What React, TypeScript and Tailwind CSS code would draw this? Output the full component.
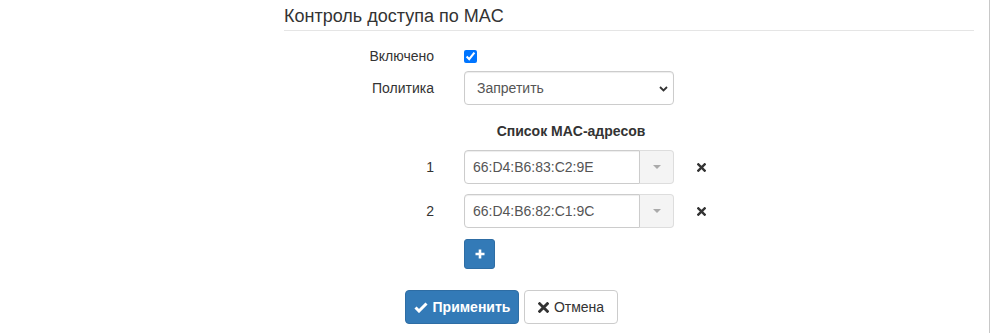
import React from 'react';

const macs = ['66:D4:B6:83:C2:9E', '66:D4:B6:82:C1:9C'];

const RemoveIcon = ({ size = 9 }: { size?: number }) => (
  <svg width={size} height={size} viewBox="0 0 10 10">
    <path d="M1.5 1.5 L8.5 8.5 M8.5 1.5 L1.5 8.5" stroke="currentColor" strokeWidth="2.6" strokeLinecap="square" />
  </svg>
);

const App: React.FC = () => {
  return (
    <div className="h-[333px] w-[990px] bg-white border-r border-[#c8c8c8] pl-[284px] pr-[15px] font-['Liberation_Sans',Arial,sans-serif] text-[14px] text-[#333]">
      {/* Heading */}
      <h4 className="pt-[6px] pb-[4px] text-[18px] leading-[20px] border-b border-[#e5e5e5]">
        Контроль доступа по MAC
      </h4>

      {/* Enabled */}
      <div className="mt-[13px] flex h-[24px] items-center gap-[30px]">
        <label className="w-[150px] text-right">Включено</label>
        <input type="checkbox" checked readOnly className="m-0 h-[13px] w-[13px] accent-[#0075ff]" />
      </div>

      {/* Policy */}
      <div className="mt-[3px] flex h-[34px] items-center gap-[30px]">
        <label className="w-[150px] text-right">Политика</label>
        <div className="relative w-[210px]">
          <select
            defaultValue="deny"
            className="h-[34px] w-full appearance-none rounded-[4px] border border-[#ccc] bg-white px-[12px] text-[14px] text-[#555] shadow-[inset_0_1px_1px_rgba(0,0,0,0.075)]"
          >
            <option value="deny">Запретить</option>
            <option value="allow">Разрешить</option>
          </select>
          <svg className="pointer-events-none absolute right-[6px] top-[15px]" width="9" height="6" viewBox="0 0 9 6">
            <path d="M1 1 L4.5 4.5 L8 1" fill="none" stroke="#333" strokeWidth="1.8" />
          </svg>
        </div>
      </div>

      {/* MAC list title */}
      <div className="mt-[16px] flex h-[20px] items-center gap-[30px]">
        <div className="w-[150px]" />
        <div className="w-[210px] pl-[4px] text-center font-bold leading-[20px]">Список MAC-адресов</div>
      </div>

      {/* MAC rows */}
      <div className="mt-[9px] flex flex-col gap-[10px]">
        {macs.map((mac, i) => (
          <div key={mac} className="flex h-[34px] items-center gap-[30px]">
            <label className="w-[150px] text-right">{i + 1}</label>
            <div className="flex w-[210px]">
              <input
                type="text"
                value={mac}
                readOnly
                className="h-[34px] w-[176px] rounded-l-[4px] border border-[#ccc] bg-white px-[8px] text-[14px] text-[#555] shadow-[inset_0_1px_1px_rgba(0,0,0,0.075)] outline-none"
              />
              <div className="flex h-[34px] w-[34px] items-center justify-center rounded-r-[4px] border border-l-0 border-[#ddd] bg-[#f4f4f4]">
                <span className="h-0 w-0 border-x-[4px] border-t-[4px] border-x-transparent border-t-[#aaa]" />
              </div>
            </div>
            <button className="ml-[-7px] text-[#333]">
              <RemoveIcon />
            </button>
          </div>
        ))}
      </div>

      {/* Add */}
      <div className="mt-[11px] flex gap-[30px]">
        <div className="w-[150px]" />
        <button className="flex h-[30px] w-[31px] items-center justify-center rounded-[3px] border border-[#2e6da4] bg-[#337ab7] text-white">
          <svg width="10" height="10" viewBox="0 0 10 10">
            <path d="M5 0.5 V9.5 M0.5 5 H9.5" stroke="currentColor" strokeWidth="2.6" />
          </svg>
        </button>
      </div>

      {/* Actions */}
      <div className="ml-[121px] mt-[21px] flex gap-[5px]">
        <button className="flex h-[34px] w-[114px] items-center justify-center gap-[5px] rounded-[4px] border border-[#2e6da4] bg-[#337ab7] font-bold text-white">
          <svg width="14" height="11" viewBox="0 0 14 11">
            <path d="M1.5 5.5 L5 9 L12.5 1.5" fill="none" stroke="currentColor" strokeWidth="3" />
          </svg>
          Применить
        </button>
        <button className="flex h-[34px] w-[94px] items-center justify-center gap-[5px] rounded-[4px] border border-[#ccc] bg-white text-[#333]">
          <RemoveIcon size={11} />
          Отмена
        </button>
      </div>
    </div>
  );
};

export default App;
